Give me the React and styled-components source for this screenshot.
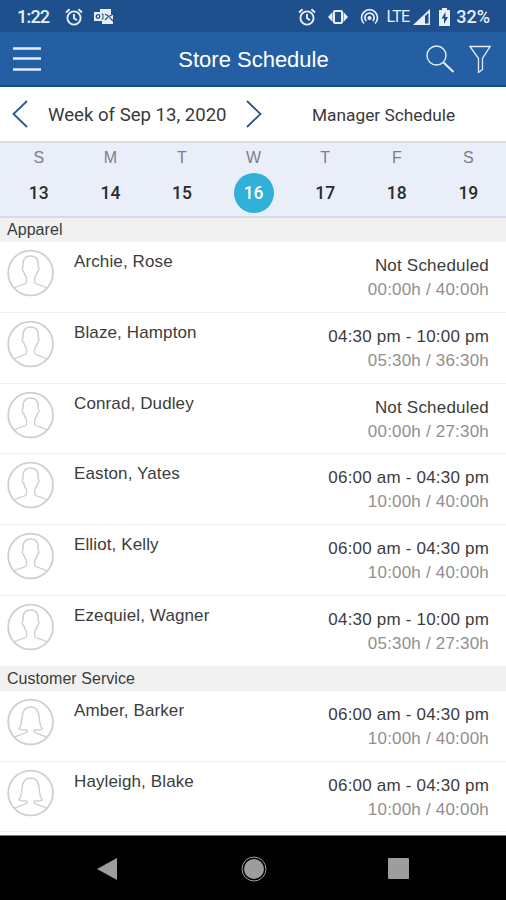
import styled, { createGlobalStyle } from "styled-components";

const GlobalStyle = createGlobalStyle`
  * {
    box-sizing: border-box;
  }
  body {
    margin: 0;
    background-color: #fff;
    font-family: "Liberation Sans", Arial, sans-serif;
  }
`;

const Screen = styled.div`
  width: 506px;
  height: 900px;
  display: flex;
  flex-direction: column;
  overflow: hidden;
  background-color: #fff;
`;

const StatusBar = styled.div`
  height: 32px;
  flex: none;
  display: flex;
  align-items: center;
  justify-content: space-between;
  padding: 2px 16px 0 17px;
  background-color: #1d508d;
  color: #e9f0fa;
`;
const StatusGroup = styled.div`
  display: flex;
  align-items: center;
`;
const StatusText = styled.span`
  margin-left: ${(props) => props.$left || 0}px;
  font-family: Roboto, sans-serif;
  font-size: ${(props) => props.$size || 18}px;
  font-weight: ${(props) => props.$weight || 500};
  letter-spacing: ${(props) => props.$spacing || 0}px;
  line-height: 30px;
  white-space: nowrap;
`;
const Icon = styled.svg`
  display: block;
  flex: none;
  fill: ${(props) => (props.$solid ? "currentColor" : "none")};
  stroke: ${(props) => (props.$solid ? "none" : "currentColor")};
  margin-left: ${(props) => props.$left || 0}px;
`;
const AvatarIcon = styled(Icon)`
  color: #cfcfcf;
`;

const AppBar = styled.header`
  height: 55px;
  flex: none;
  display: grid;
  grid-template-columns: 91px 1fr 90px;
  align-items: center;
  background-color: #235fa2;
  border-bottom: 2px solid #144a93;
  color: #e3ecf8;
`;
const Title = styled.h1`
  margin: 2px 0 0;
  text-align: center;
  font-size: 22px;
  font-weight: normal;
  line-height: 30px;
  color: #fff;
`;
const Actions = styled.div`
  display: flex;
  align-items: center;
`;

const WeekBar = styled.div`
  height: 54px;
  flex: none;
  display: flex;
  align-items: center;
  padding-left: 12px;
  color: #2a568e;
`;
const WeekLabel = styled.span`
  width: 178px;
  margin: 1px 20px 0;
  font-family: Roboto, sans-serif;
  font-size: 18.6px;
  white-space: nowrap;
  color: #3a3a3a;
`;
const ManagerLink = styled(WeekLabel)`
  width: auto;
  margin: 1px 0 0 50px;
  font-size: 17.3px;
`;

const Days = styled.div`
  height: 77px;
  flex: none;
  display: grid;
  grid-template-columns: repeat(7, 71.6px);
  padding: 5px 0 0 3px;
  background-color: #e9eef9;
  border-top: 2px solid #dadde5;
  border-bottom: 2px solid #d5daea;
`;
const Day = styled.div`
  display: flex;
  flex-direction: column;
  align-items: center;
`;
const DayName = styled.span`
  font-size: 16px;
  line-height: 20px;
  color: #7b7e86;
`;
const DayNumber = styled.span`
  width: 40px;
  height: 40px;
  margin-top: 5px;
  border-radius: 50%;
  text-align: center;
  font-family: Roboto, sans-serif;
  font-size: 17.5px;
  font-weight: 500;
  line-height: 40px;
  background-color: ${(props) => (props.$active ? "#31b0d8" : "transparent")};
  color: ${(props) => (props.$active ? "#fff" : "#2b2b2b")};
`;

const SectionTitle = styled.h2`
  height: 24px;
  flex: none;
  margin: 0;
  padding-left: 7px;
  font-size: 16px;
  font-weight: normal;
  line-height: 24px;
  letter-spacing: 0.05px;
  background-color: #f1f1f1;
  color: #3c3c3c;
`;
const Row = styled.div`
  height: 70.8px;
  flex: none;
  display: flex;
  padding: 7px 17px 0 7px;
  border-bottom: 1px solid #efefef;
`;
const Name = styled.span`
  flex: 1;
  margin-left: 19px;
  padding-top: 3px;
  font-size: 17px;
  letter-spacing: 0.12px;
  line-height: 20px;
  color: #3c3c3c;
`;
const Shift = styled.div`
  display: flex;
  flex-direction: column;
  align-items: flex-end;
  padding-top: 5px;
`;
const Time = styled.span`
  font-size: 17px;
  line-height: 24px;
  letter-spacing: 0.2px;
  color: #3c3c3c;
`;
const Hours = styled(Time)`
  color: #909090;
`;

const NavBar = styled.nav`
  height: 65px;
  flex: none;
  display: flex;
  align-items: center;
  margin-top: auto;
  padding-top: 1px;
  border-top: 1px solid #777;
  background-color: #000;
  color: #9d9d9d;
`;

const AlarmIcon = ({ left }) => (
  <Icon $left={left} width="18" height="18" viewBox="0 0 18 18" strokeWidth="1.9">
    <circle cx="9" cy="10" r="6.6" />
    <path d="M9 6v4.3l3 2M1 4.5L4.6 1.3M17 4.5L13.4 1.3" />
  </Icon>
);

const Avatar = ({ female }) => (
  <AvatarIcon width="48" height="48" viewBox="0 0 48 48" strokeWidth="1.4">
    <circle cx="23.6" cy="24" r="22.4" strokeWidth="1.8" />
    {female ? (
      <path d="M7.500 39.500c3-2.500 9.500-3.200 12.500-5.500.8-1 .3-1.800-1-2-2.500.2-5-.2-7-1.200 2.200-2.800 2.600-6.300 3-11.300.4-6.500 3.500-10.500 8.600-10.500s8.200 4 8.600 10.500c.4 5 .8 8.500 3 11.300-2 1-4.500 1.400-7 1.200-1.300.2-1.800 1-1 2 3 2.300 9.500 3 12.500 5.500" />
    ) : (
      <path d="M7.500 39c3.500-2.700 8-2.700 11-4.500 1.400-1 1.200-4.500.7-6.700-1.400-1.600-2.100-3.300-2.500-5.300-1.700-.8-2-3.800-.7-4.700-.8-7 2-10.800 7.600-10.800s8.400 3.800 7.600 10.800c1.300.9 1 3.900-.7 4.700-.4 2-1.100 3.700-2.500 5.300-.5 2.200-.7 5.700.7 6.700 3 1.800 7.500 1.800 11 4.500" />
    )}
  </AvatarIcon>
);

const days = [
  ["S", 13],
  ["M", 14],
  ["T", 15],
  ["W", 16],
  ["T", 17],
  ["F", 18],
  ["S", 19],
];

const sections = [
  {
    title: "Apparel",
    people: [
      { name: "Archie, Rose", time: "Not Scheduled", hours: "00:00h / 40:00h" },
      { name: "Blaze, Hampton", time: "04:30 pm - 10:00 pm", hours: "05:30h / 36:30h" },
      { name: "Conrad, Dudley", time: "Not Scheduled", hours: "00:00h / 27:30h" },
      { name: "Easton, Yates", time: "06:00 am - 04:30 pm", hours: "10:00h / 40:00h" },
      { name: "Elliot, Kelly", time: "06:00 am - 04:30 pm", hours: "10:00h / 40:00h" },
      { name: "Ezequiel, Wagner", time: "04:30 pm - 10:00 pm", hours: "05:30h / 27:30h" },
    ],
  },
  {
    title: "Customer Service",
    people: [
      { name: "Amber, Barker", time: "06:00 am - 04:30 pm", hours: "10:00h / 40:00h", female: true },
      { name: "Hayleigh, Blake", time: "06:00 am - 04:30 pm", hours: "10:00h / 40:00h", female: true },
    ],
  },
];

const App = () => {
  return (
    <Screen>
      <GlobalStyle />
      <StatusBar>
        <StatusGroup>
          <StatusText $spacing={-0.8}>1:22</StatusText>
          <AlarmIcon left={16} />
          <Icon $solid $left={11} width="20" height="16" viewBox="0 0 20 16">
            <path d="M6 0h11v5l2 1v9H8v-3H0V3h6z" />
            <path d="M11 5l4 2.500 4-2.500M11 11l3-3M19 12l-3.500-3.500" fill="none" stroke="#1d508d" strokeWidth="1.200" />
            <circle cx="4" cy="7.500" r="1.800" fill="none" stroke="#1d508d" strokeWidth="1.300" />
            <path d="M7.500 5h1.500v5H7.500" fill="none" stroke="#1d508d" />
          </Icon>
        </StatusGroup>
        <StatusGroup>
          <AlarmIcon />
          <Icon $left={12} width="20" height="16" viewBox="0 0 20 16" strokeWidth="2">
            <rect x="6" y="2" width="8" height="12" rx="1" />
            <path d="M4.500 3v10L0 8zM15.500 3v10L20 8z" fill="currentColor" stroke="none" />
          </Icon>
          <Icon $left={12} width="19" height="18" viewBox="0 0 19 18" strokeWidth="1.700">
            <path d="M4 15.500a8 8 0 1 1 11 0M6.300 13a4.600 4.600 0 1 1 6.400 0" />
            <circle cx="9.500" cy="10" r="1.200" fill="currentColor" />
          </Icon>
          <StatusText $left={8} $size={16} $weight={400} $spacing={-0.8}>
            LTE
          </StatusText>
          <Icon $solid $left={4} width="17" height="16" viewBox="0 0 17 16">
            <path d="M0 16L17 0v16z" />
            <path d="M12 7l3.500-3v10.500H12z" fill="#1d508d" />
          </Icon>
          <Icon $solid $left={9} width="11" height="18" viewBox="0 0 11 18">
            <path d="M3 0h5v2h3v16H0V2h3z" />
            <path d="M6.500 4L2.500 10.500h2.500V16l4-7H6.500z" fill="#1d508d" />
          </Icon>
          <StatusText $left={6}>32%</StatusText>
        </StatusGroup>
      </StatusBar>

      <AppBar>
        <Icon $left={13} width="28" height="26" viewBox="0 0 28 26" strokeWidth="2.600">
          <path d="M0 2.500h28M0 12.500h28M0 23.500h28" />
        </Icon>
        <Title>Store Schedule</Title>
        <Actions>
          <Icon $left={9} width="30" height="30" viewBox="0 0 30 30" strokeWidth="1.400">
            <circle cx="11.500" cy="11.500" r="9.500" />
            <path d="M18.500 18.500L28.500 28" strokeWidth="2" />
          </Icon>
          <Icon $left={14} width="22" height="28" viewBox="0 0 22 28" strokeWidth="1.300">
            <path d="M1 1.500h20l-7.500 12v11l-4 3v-14z" />
          </Icon>
        </Actions>
      </AppBar>

      <WeekBar>
        <Icon width="16" height="28" viewBox="0 0 16 28" strokeWidth="1.800">
          <path d="M15 1L1.500 14 15 27" />
        </Icon>
        <WeekLabel>Week of Sep 13, 2020</WeekLabel>
        <Icon width="16" height="28" viewBox="0 0 16 28" strokeWidth="1.800">
          <path d="M1 1l13.500 13L1 27" />
        </Icon>
        <ManagerLink>Manager Schedule</ManagerLink>
      </WeekBar>

      <Days>
        {days.map(([name, number]) => (
          <Day key={number}>
            <DayName>{name}</DayName>
            <DayNumber $active={number === 16}>{number}</DayNumber>
          </Day>
        ))}
      </Days>

      {sections.map((section) => (
        <section key={section.title}>
          <SectionTitle>{section.title}</SectionTitle>
          {section.people.map((person) => (
            <Row key={person.name}>
              <Avatar female={person.female} />
              <Name>{person.name}</Name>
              <Shift>
                <Time>{person.time}</Time>
                <Hours>{person.hours}</Hours>
              </Shift>
            </Row>
          ))}
        </section>
      ))}

      <NavBar>
        <Icon $solid $left={97} width="20" height="24" viewBox="0 0 20 24">
          <path d="M0 12L20 1v22z" />
        </Icon>
        <Icon $left={124} width="26" height="26" viewBox="0 0 26 26">
          <circle cx="13" cy="13" r="12" />
          <circle cx="13" cy="13" r="10" fill="currentColor" stroke="none" />
        </Icon>
        <Icon $solid $left={121} width="21" height="21" viewBox="0 0 21 21">
          <rect width="21" height="21" rx="1" />
        </Icon>
      </NavBar>
    </Screen>
  );
};

export default App;
